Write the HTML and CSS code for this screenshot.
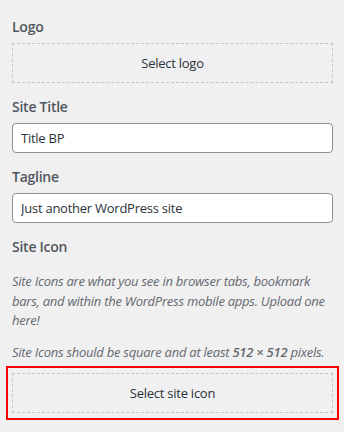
FILE: index.html
```html
<!DOCTYPE html>
<html lang="en">
<head>
  <meta charset="UTF-8">
  <title>Site Identity</title>
  <link rel="stylesheet" href="styles.css">
</head>
<body>
  <div class="panel">
    <div class="control">
      <span class="control-title">Logo</span>
      <button class="media-add" type="button">Select logo</button>
    </div>

    <div class="control">
      <label class="control-title" for="blogname">Site Title</label>
      <input type="text" id="blogname" class="text-field" value="Title BP">
    </div>

    <div class="control">
      <label class="control-title" for="blogdescription">Tagline</label>
      <input type="text" id="blogdescription" class="text-field" value="Just another WordPress site">
    </div>

    <div class="control">
      <span class="control-title">Site Icon</span>
      <p class="description">Site Icons are what you see in browser tabs, bookmark bars, and within the WordPress mobile apps. Upload one here!</p>
      <p class="description">Site Icons should be square and at least <strong>512 &times; 512</strong> pixels.</p>
      <div class="highlight">
        <button class="media-add" type="button">Select site icon</button>
      </div>
    </div>
  </div>
</body>
</html>
```

FILE: styles.css
```css
body {
  margin: 0;
  background: #f0f0f1;
  font-family: "Open Sans", "Noto Sans", sans-serif;
  letter-spacing: -0.25px;
  color: #2c3338;
}
.panel {
  padding: 17px 11px 12px 12px;
}
.control {
  margin-bottom: 14px;
}
.control-title {
  display: block;
  font-size: 14px;
  font-weight: 600;
  line-height: 20px;
  color: #50575e;
  margin-bottom: 6px;
}
.media-add {
  display: block;
  width: 100%;
  height: 40px;
  background: #f0f0f2;
  border: 1px dashed #c3c4c7;
  border-radius: 0;
  font-family: inherit;
  font-size: 13px;
  letter-spacing: -0.25px;
  color: #2c3338;
  cursor: pointer;
}
.text-field {
  display: block;
  box-sizing: border-box;
  width: 100%;
  height: 30px;
  padding: 0 8px;
  background: #fff;
  border: 1px solid #8c8f94;
  border-radius: 4px;
  font-family: inherit;
  font-size: 13px;
  letter-spacing: -0.25px;
  color: #2c3338;
}
.description {
  margin: 0 0 12px;
  font-size: 13px;
  line-height: 19.5px;
  font-style: italic;
  color: #646970;
}
.control-title + .description {
  margin-top: 15px;
}
.description:last-of-type {
  margin-bottom: 4px;
}
.description strong {
  font-weight: 600;
}
.highlight {
  margin: 0 -6px;
  padding: 5px 4px;
  border: 2px solid #ff0000;
}
```
